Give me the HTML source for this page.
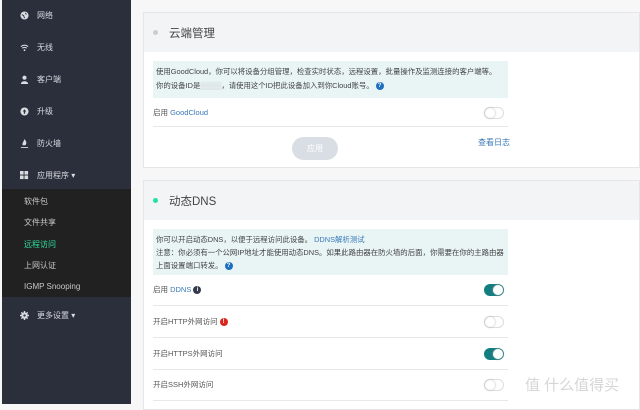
<!DOCTYPE html>
<html><head><meta charset="utf-8"><style>
*{margin:0;padding:0;box-sizing:border-box}
body{width:640px;height:404px;overflow:hidden;background:#f7f7f7;font-family:"Liberation Sans","Noto Sans CJK SC",sans-serif;position:relative}
.sb{position:absolute;left:2px;top:0;width:129px;height:404px;background:#2b2f3c}
.it{position:absolute;left:18px;color:#d9dbe0;font-size:8px;display:flex;align-items:center}
.ic{width:9px;height:9px;margin-right:8px;display:inline-block}
.sub{position:absolute;left:0;top:189px;width:129px;height:108px;background:#212121}
.si{position:absolute;left:22px;color:#c7c7c7;font-size:8px}
.card{position:absolute;left:143px;right:0;background:#fff;border:1px solid #e6e6e6}
.hd{height:39px;background:#f3f4f5;display:flex;align-items:center;padding-left:9px;font-size:11.5px;color:#444}
.dot{width:5px;height:5px;border-radius:50%;margin-right:11px}
.info{position:absolute;left:9px;width:355px;background:#e9f5f5;font-size:7.4px;color:#444;padding:4px 3px;line-height:14px}
.row{position:absolute;left:9px;width:355px;font-size:7.5px;color:#555;border-bottom:1px solid #e8e8e8;height:16px}
.tg{position:absolute;right:4px;top:-5px;width:20px;height:12px;border-radius:6px;border:1px solid #ddd;background:#fff}
.tg::after{content:"";position:absolute;left:0;top:0;width:10px;height:10px;border-radius:50%;background:#fff;box-shadow:0 0 2px #aaa}
.tg.on{background:#137d7f;border-color:#137d7f}
.tg.on::after{left:8px}
.bl{color:#3a78b8}
.q{display:inline-block;width:8px;height:8px;border-radius:50%;background:#1e6fbf;color:#fff;font-size:6px;text-align:center;line-height:8px;font-weight:bold;vertical-align:middle}
</style></head><body>
<div class="sb">
<div class="it" style="top:10px"><svg class="ic" viewBox="0 0 10 10"><circle cx="5" cy="5" r="4.5" fill="#d9dbe0"/><path d="M2 4l2 1 1 3M6 2l1 2" stroke="#2b2f3c" stroke-width="1" fill="none"/></svg>网络</div>
<div class="it" style="top:42px"><svg class="ic" viewBox="0 0 10 10"><path d="M1 4a6 6 0 0 1 8 0M2.5 5.8a4 4 0 0 1 5 0" stroke="#d9dbe0" stroke-width="1.2" fill="none"/><circle cx="5" cy="8" r="1" fill="#d9dbe0"/></svg>无线</div>
<div class="it" style="top:74px"><svg class="ic" viewBox="0 0 10 10"><circle cx="5" cy="3" r="2.3" fill="#d9dbe0"/><path d="M1 10c0-4 8-4 8 0z" fill="#d9dbe0"/></svg>客户端</div>
<div class="it" style="top:106px"><svg class="ic" viewBox="0 0 10 10"><circle cx="5" cy="5" r="4.5" fill="#d9dbe0"/><path d="M5 2.5l-2 2.5h1.3v2.5h1.4v-2.5h1.3z" fill="#2b2f3c"/></svg>升级</div>
<div class="it" style="top:138px"><svg class="ic" viewBox="0 0 10 10"><path d="M5 0c2 3 3 4 1 7H3c-1-2 1-4 2-7zM1 9h8v1H1z" fill="#d9dbe0"/></svg>防火墙</div>
<div class="it" style="top:170px"><svg class="ic" viewBox="0 0 10 10"><rect x="0" y="0" width="4" height="4" fill="#d9dbe0"/><rect x="5" y="0" width="4" height="4" fill="#d9dbe0"/><rect x="0" y="5" width="4" height="4" fill="#d9dbe0"/><rect x="5" y="5" width="4" height="4" fill="#d9dbe0"/></svg>应用程序 ▾</div>
<div class="sub">
<div class="si" style="top:7px">软件包</div>
<div class="si" style="top:28px">文件共享</div>
<div class="si" style="top:50px;color:#2fe0a0">远程访问</div>
<div class="si" style="top:71px">上网认证</div>
<div class="si" style="top:93px">IGMP Snooping</div>
</div>
<div class="it" style="top:310px"><svg class="ic" viewBox="0 0 10 10"><circle cx="5" cy="5" r="3.5" fill="#d9dbe0"/><path d="M5 0v10M0 5h10M1.5 1.5l7 7M8.5 1.5l-7 7" stroke="#d9dbe0" stroke-width="1.6"/><circle cx="5" cy="5" r="1.3" fill="#2b2f3c"/></svg>更多设置 ▾</div>
</div>

<div class="card" style="top:12px;height:156px">
<div class="hd"><span class="dot" style="background:#ccc"></span>云端管理</div>
<div class="info" style="top:48px;height:37px">使用GoodCloud，你可以将设备分组管理，检查实时状态，远程设置，批量操作及监测连接的客户端等。<br>你的设备ID是<span style="color:#ccc">▒▒▒▒</span>，请使用这个ID把此设备加入到你Cloud账号。 <span class="q">?</span></div>
<div class="row" style="top:93px;height:21px;line-height:14px">启用 <span class="bl">GoodCloud</span><div class="tg" style="top:1px"></div></div>
<div style="position:absolute;left:148px;top:124px;width:46px;height:23px;border-radius:12px;background:#d9dee4;color:#fff;font-size:8px;text-align:center;line-height:23px">应用</div>
<div class="bl" style="position:absolute;left:334px;top:124px;font-size:8px">查看日志</div>
</div>

<div class="card" style="top:180px;height:230px">
<div class="hd"><span class="dot" style="background:#22e3a0"></span>动态DNS</div>
<div class="info" style="top:48px;height:46px;line-height:13px;padding-top:4px">你可以开启动态DNS，以便于远程访问此设备。 <span class="bl">DDNS解析测试</span><br>注意：你必须有一个公网IP地址才能使用动态DNS。如果此路由器在防火墙的后面，你需要在你的主路由器上面设置端口转发。 <span class="q">?</span></div>
<div class="row" style="top:103px;height:22px;line-height:12px">启用 <span class="bl">DDNS</span> <span class="q" style="background:#333b4d">i</span><div class="tg on" style="top:0"></div></div>
<div class="row" style="top:135px;height:22px;line-height:12px">开启HTTP外网访问 <span class="q" style="background:#d9261c">!</span><div class="tg" style="top:0"></div></div>
<div class="row" style="top:167px;height:22px;line-height:12px">开启HTTPS外网访问<div class="tg on" style="top:0"></div></div>
<div class="row" style="top:198px;height:22px;line-height:12px">开启SSH外网访问<div class="tg" style="top:0"></div></div>
</div>
<div style="position:absolute;left:525px;top:374px;font-size:15px;color:#d6d6d6">值 什么值得买</div>
</body></html>
